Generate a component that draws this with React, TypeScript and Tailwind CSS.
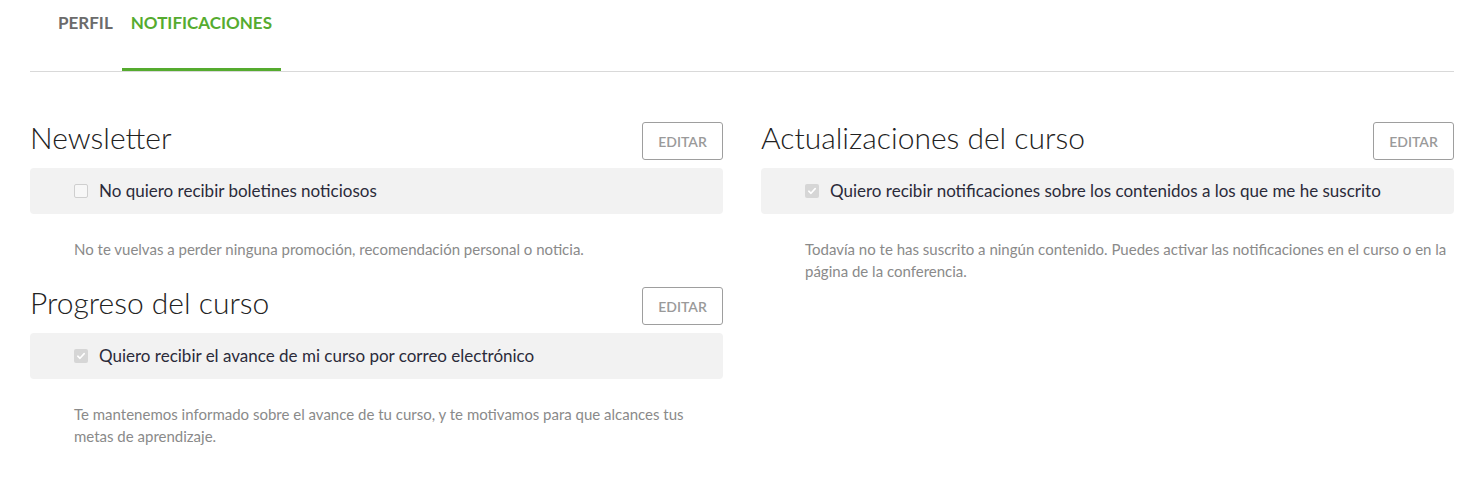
import React from 'react';

const CheckBox = ({ checked }: { checked: boolean }) =>
  checked ? (
    <span className="flex h-[14px] w-[14px] shrink-0 items-center justify-center rounded-[2px] bg-[#d6d6d6]">
      <svg width="10" height="10" viewBox="0 0 10 10" fill="none">
        <path d="M1.8 5.2 4 7.3 8.2 2.6" stroke="#ffffff" strokeWidth="1.6" strokeLinecap="round" strokeLinejoin="round" />
      </svg>
    </span>
  ) : (
    <span className="h-[14px] w-[14px] shrink-0 rounded-[2px] border border-[#cfcfcf] bg-[#f7f7f7]" />
  );

const Section = ({
  title,
  label,
  checked,
  description,
}: {
  title: string;
  label: string;
  checked: boolean;
  description: string;
}) => (
  <div className="mb-[27px]">
    <div className="flex h-[38px] items-center justify-between">
      <h2 className="pb-[8px] text-[30px] font-light leading-none text-[#222]">{title}</h2>
      <button className="flex h-[38px] w-[81px] items-center justify-center rounded-[3px] border border-[#9e9e9e] text-[14px] font-semibold text-[#9a9a9a]">
        EDITAR
      </button>
    </div>
    <div className="mt-2 flex h-[46px] items-center gap-[11px] rounded-[4px] bg-[#f2f2f2] pl-[44px]">
      <CheckBox checked={checked} />
      <span className="text-[17px] text-[#2b2b3a]">{label}</span>
    </div>
    <p className="mt-6 pl-[44px] text-[15px] leading-[22px] text-[#8a8a8a]">{description}</p>
  </div>
);

export default function App() {
  return (
    <div className="min-h-screen bg-white pl-[30px] pr-[23px]" style={{ fontFamily: 'Lato, "Open Sans", sans-serif' }}>
      {/* tabs */}
      <div className="flex h-[72px] border-b border-[#d9d9d9] pl-[19px]">
        <div className="px-[9px] pt-[10px] text-[17px] font-bold text-[#6b6b6b]">PERFIL</div>
        <div className="border-b-[3px] border-[#55ab2f] px-[9px] pt-[10px] text-[17px] font-bold text-[#55ab2f]">
          NOTIFICACIONES
        </div>
      </div>

      {/* content */}
      <div className="mt-[50px] grid grid-cols-2 gap-[38px]">
        <div>
          <Section
            title="Newsletter"
            label="No quiero recibir boletines noticiosos"
            checked={false}
            description="No te vuelvas a perder ninguna promoción, recomendación personal o noticia."
          />
          <Section
            title="Progreso del curso"
            label="Quiero recibir el avance de mi curso por correo electrónico"
            checked={true}
            description="Te mantenemos informado sobre el avance de tu curso, y te motivamos para que alcances tus metas de aprendizaje."
          />
        </div>
        <div>
          <Section
            title="Actualizaciones del curso"
            label="Quiero recibir notificaciones sobre los contenidos a los que me he suscrito"
            checked={true}
            description="Todavía no te has suscrito a ningún contenido. Puedes activar las notificaciones en el curso o en la página de la conferencia."
          />
        </div>
      </div>
    </div>
  );
}
